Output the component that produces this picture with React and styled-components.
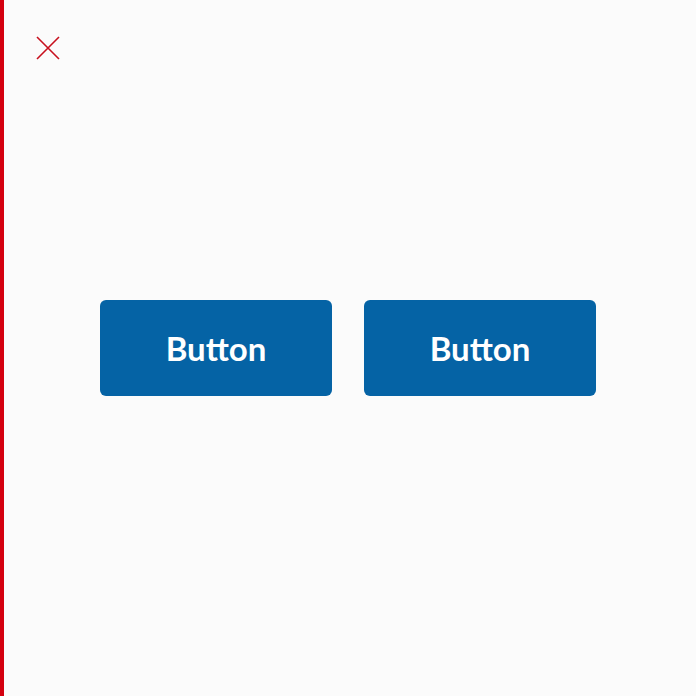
import React from 'react';
import styled, { createGlobalStyle } from 'styled-components';

const GlobalStyle = createGlobalStyle`
  html, body {
    margin: 0;
    padding: 0;
    background: #fbfbfb;
  }
`;

const Page = styled.div`
  min-height: 100vh;
  display: grid;
  grid-template-rows: 96px 1fr 96px;
  background: #fbfbfb;
  box-shadow: inset 4px 0 0 #d4000f;
  font-family: Lato, 'Noto Sans', sans-serif;
`;

const TopBar = styled.div`
  padding: 36px 0 0 36px;
`;

const CloseButton = styled.button`
  width: 24px;
  height: 24px;
  padding: 0;
  border: 0;
  background: none;
  display: block;
  cursor: pointer;
`;

const Main = styled.main`
  display: flex;
  align-items: center;
  justify-content: center;
  gap: 32px;
`;

const ActionButton = styled.button`
  width: 232px;
  height: 96px;
  border: 0;
  border-radius: 6px;
  background: #0563a5;
  color: #ffffff;
  font-family: inherit;
  font-size: 33px;
  font-weight: 700;
  line-height: 1;
  cursor: pointer;
`;

const App = () => (
  <>
    <GlobalStyle />
    <Page>
      <TopBar>
        <CloseButton aria-label="Close">
          <svg width="24" height="24" viewBox="0 0 24 24" fill="none">
            <path d="M1 1L23 23M23 1L1 23" stroke="#c8101e" strokeWidth="1.6" />
          </svg>
        </CloseButton>
      </TopBar>
      <Main>
        <ActionButton>Button</ActionButton>
        <ActionButton>Button</ActionButton>
      </Main>
      <div />
    </Page>
  </>
);

export default App;
